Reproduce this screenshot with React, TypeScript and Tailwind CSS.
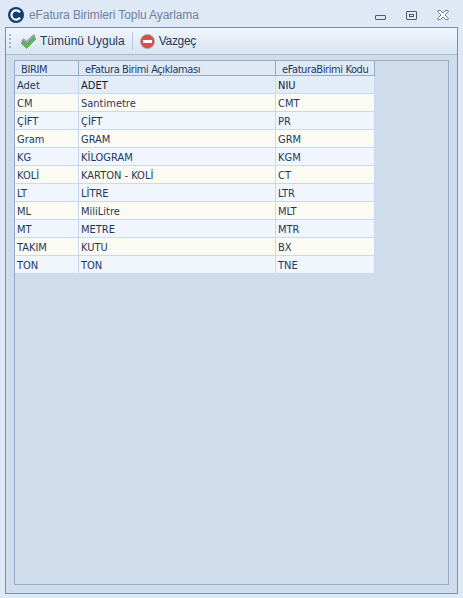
const ROWS = [
  ["Adet", "ADET", "NIU"],
  ["CM", "Santimetre", "CMT"],
  ["ÇİFT", "ÇİFT", "PR"],
  ["Gram", "GRAM", "GRM"],
  ["KG", "KİLOGRAM", "KGM"],
  ["KOLİ", "KARTON - KOLİ", "CT"],
  ["LT", "LİTRE", "LTR"],
  ["ML", "MiliLitre", "MLT"],
  ["MT", "METRE", "MTR"],
  ["TAKIM", "KUTU", "BX"],
  ["TON", "TON", "TNE"],
];

function AppLogo() {
  return (
    <svg width="16" height="16" viewBox="0 0 16 16">
      <circle cx="8" cy="8" r="8" fill="#123f6d" />
      <path d="M12 5.300A4.700 4.700 0 1 0 12 10.700" fill="none" stroke="#fff" strokeWidth="2.200" />
    </svg>
  );
}

function CheckIcon() {
  return (
    <svg width="17" height="17" viewBox="0 0 17 17">
      <path d="M1.500 7.500 4 5.500 6.500 8 13.500 1.500 15.500 3 6.500 11.500Z" fill="#a3a3c4" stroke="#8a8aa8" strokeWidth=".5" />
      <path d="M1 10 3.500 8 6.500 11 14 4 16 6 6.500 15.500Z" fill="#62b84e" stroke="#3f9a35" strokeWidth=".6" />
    </svg>
  );
}

function StopIcon() {
  return (
    <svg width="15" height="15" viewBox="0 0 15 15">
      <circle cx="7.500" cy="7.500" r="7" fill="#d2504f" stroke="#b0a0a0" strokeWidth=".8" />
      <rect x="3" y="6" width="9" height="3" fill="#fff" />
    </svg>
  );
}

export default function App() {
  return (
    <div
      className="flex h-[598px] w-[463px] flex-col overflow-hidden bg-[#dfe9f5] text-[12px] text-[#1e395b]"
      style={{ fontFamily: '"Liberation Sans", Arial, sans-serif' }}
    >
      {/* title bar */}
      <div className="flex h-[27px] shrink-0 items-center pl-[8px] pr-[14px] pt-[3px]">
        <AppLogo />
        <span className="ml-[5px] text-[12px] tracking-[-0.1px] text-[#6d83a3]">eFatura Birimleri Toplu Ayarlama</span>
        <div className="ml-auto flex items-center gap-[20px]">
          <div className="mt-[4px] h-[5px] w-[11px] rounded-[1px] border border-[#4a5a6e]" />
          <div className="flex h-[9px] w-[11px] items-center justify-center rounded-[1px] border border-[#4a5a6e]">
            <div className="h-[3px] w-[5px] border border-[#4a5a6e]" />
          </div>
          <svg width="12" height="10" viewBox="0 0 12 10">
            <path
              d="M1 .5H3.500L6 3 8.500 .5H11L11.500 1.500 8 5 11.500 8.500 11 9.500H8.500L6 7 3.500 9.500H1L.5 8.500 4 5 .5 1.500Z"
              fill="#fff"
              stroke="#4a5a6e"
              strokeWidth=".8"
            />
          </svg>
        </div>
      </div>

      {/* window body */}
      <div className="mx-[5px] mb-[4px] flex min-h-0 flex-1 flex-col border border-[#7590af] bg-[#cfdcec]">
        <div className="flex h-[27px] shrink-0 items-center border-b border-[#a9bbd3] bg-gradient-to-b from-[#f1f6fc] to-[#d8e4f2] pl-[3px]">
          <div className="flex flex-col gap-[2px]">
            <div className="h-[2px] w-[2px] bg-[#a5b6cc]" />
            <div className="h-[2px] w-[2px] bg-[#a5b6cc]" />
            <div className="h-[2px] w-[2px] bg-[#a5b6cc]" />
            <div className="h-[2px] w-[2px] bg-[#a5b6cc]" />
          </div>
          <div className="ml-[9px] flex items-center gap-[3px]">
            <CheckIcon />
            <span>Tümünü Uygula</span>
          </div>
          <div className="ml-[7px] h-[18px] w-px bg-[#b7c7da]" />
          <div className="ml-[7px] flex items-center gap-[4px]">
            <StopIcon />
            <span className="tracking-[-0.3px]">Vazgeç</span>
          </div>
        </div>

        {/* grid frame */}
        <div className="mx-[8px] mb-[8px] mt-[5px] min-h-0 flex-1 border border-[#98aac5] bg-[#cfdcec]">
          <div
            className="w-[360px] text-[11px]"
            style={{ fontFamily: '"DejaVu Sans Condensed", "DejaVu Sans", sans-serif' }}
          >
            <div className="grid h-[14px] grid-cols-[64px_197px_99px] overflow-hidden bg-[#dfe9f5] leading-[17px] tracking-[-0.4px]">
              <div className="border-r border-[#98aac5] pl-[6px]">BIRIM</div>
              <div className="border-r border-[#98aac5] pl-[6px]">eFatura Birimi Açıklaması</div>
              <div className="overflow-hidden whitespace-nowrap border-r border-[#98aac5] pl-[6px]">eFaturaBirimi Kodu</div>
            </div>
            <div className="h-px bg-[#98aac5]" />
            {ROWS.map((row, i) => (
              <div
                key={row[0]}
                className={`grid h-[18px] grid-cols-[64px_197px_99px] border-b border-[#c8daf2] leading-[19px] ${
                  i === 0 ? "bg-[#e3edf8] text-[#101c2c]" : i % 2 === 1 ? "bg-[#fcfbf3]" : "bg-[#f1f5fc]"
                }`}
              >
                <div className={`border-r border-[#c8daf2] pl-[2px] ${i === 0 ? "text-[#1e395b]" : ""}`}>{row[0]}</div>
                <div className="border-r border-[#c8daf2] pl-[2px]">{row[1]}</div>
                <div className="border-r border-[#c8daf2] pl-[2px]">{row[2]}</div>
              </div>
            ))}
          </div>
        </div>
      </div>
    </div>
  );
}
